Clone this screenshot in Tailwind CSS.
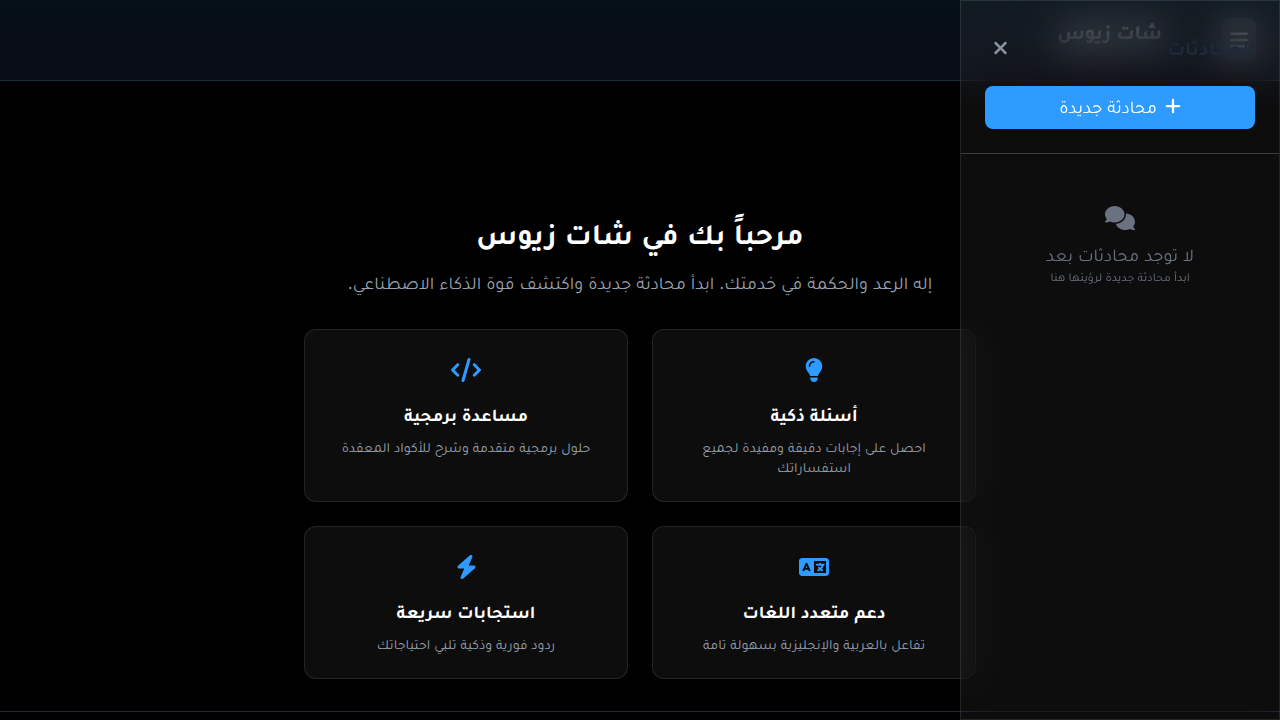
<!DOCTYPE html>
<html lang="ar" dir="rtl">
<head>
<meta charset="utf-8">
<meta name="viewport" content="width=device-width, initial-scale=1">
<title>شات زيوس</title>
<script src="https://cdn.jsdelivr.net/npm/@tailwindcss/browser@4"></script>
</head>
<body class="bg-black text-white font-['Liberation_Sans',Tajawal,sans-serif] h-screen overflow-hidden flex flex-col">
<header class="h-[81px] shrink-0 border-b border-gray-800 bg-linear-to-b from-[#041018] via-[#080d17] via-40% to-[#080d17] px-6 flex items-center">
  <button type="button" aria-label="القائمة" class="w-[34px] h-11 rounded-lg bg-white/10 flex items-center justify-center">
    <svg class="w-[18px] h-5" viewBox="0 0 448 512" fill="currentColor"><path d="M0 96C0 78.300 14.300 64 32 64H416c17.700 0 32 14.300 32 32s-14.300 32-32 32H32C14.300 128 0 113.700 0 96zM0 256c0-17.700 14.300-32 32-32H416c17.700 0 32 14.300 32 32s-14.300 32-32 32H32c-17.700 0-32-14.300-32-32zM448 416c0 17.700-14.300 32-32 32H32c-17.700 0-32-14.300-32-32s14.300-32 32-32H416c17.700 0 32 14.300 32 32z"/></svg>
  </button>
  <div class="ms-[60px] pb-4"><h1 class="text-xl leading-7 font-bold">شات زيوس</h1></div>
</header>

<main class="flex-1 flex flex-col justify-end items-center px-4 pb-8">
  <div class="w-full max-w-2xl text-center">
    <h2 class="text-3xl leading-8 font-bold mb-5">مرحباً بك في شات زيوس</h2>
    <p class="text-lg leading-[27px] text-gray-400 mb-8">إله الرعد والحكمة في خدمتك. ابدأ محادثة جديدة واكتشف قوة الذكاء الاصطناعي.</p>
    <div class="grid grid-cols-2 gap-6">
      <article class="rounded-xl border border-white/10 bg-white/5 p-6">
        <svg class="h-6 mx-auto mt-1 mb-5 text-[#2d9bff]" viewBox="0 0 384 512" fill="currentColor"><path d="M272 384c9.600-31.900 29.500-59.100 49.200-86.200c5.200-7.100 10.400-14.200 15.400-21.400c19.800-28.500 31.400-63 31.400-100.300C368 78.800 289.200 0 192 0S16 78.800 16 176c0 37.300 11.600 71.900 31.400 100.300c5 7.200 10.200 14.300 15.400 21.400c19.800 27.100 39.700 54.400 49.200 86.200H272zM192 512c44.200 0 80-35.800 80-80V416H112v16c0 44.200 35.800 80 80 80zM112 176c0 8.800-7.200 16-16 16s-16-7.200-16-16c0-61.900 50.100-112 112-112c8.800 0 16 7.200 16 16s-7.200 16-16 16c-44.200 0-80 35.800-80 80z"/></svg>
        <h3 class="text-lg leading-[27px] font-bold mb-2">أسئلة ذكية</h3>
        <p class="text-sm leading-5 text-gray-400">احصل على إجابات دقيقة ومفيدة لجميع استفساراتك</p>
      </article>
      <article class="rounded-xl border border-white/10 bg-white/5 p-6">
        <svg class="h-6 mx-auto mt-1 mb-5 text-[#2d9bff]" viewBox="0 0 640 512" fill="currentColor"><path d="M392.800 1.200c-17-4.900-34.700 5-39.600 22l-128 448c-4.900 17 5 34.700 22 39.600s34.700-5 39.600-22l128-448c4.900-17-5-34.700-22-39.600zm80.600 120.100c-12.500 12.500-12.500 32.800 0 45.300L562.700 256l-89.400 89.400c-12.500 12.500-12.500 32.800 0 45.300s32.800 12.500 45.300 0l112-112c12.500-12.500 12.500-32.800 0-45.300l-112-112c-12.500-12.500-32.800-12.500-45.300 0zm-306.700 0c-12.500-12.500-32.800-12.500-45.300 0l-112 112c-12.500 12.500-12.500 32.800 0 45.300l112 112c12.500 12.500 32.800 12.500 45.300 0s12.500-32.800 0-45.300L77.300 256l89.400-89.400c12.500-12.500 12.500-32.800 0-45.300z"/></svg>
        <h3 class="text-lg leading-[27px] font-bold mb-2">مساعدة برمجية</h3>
        <p class="text-sm leading-5 text-gray-400">حلول برمجية متقدمة وشرح للأكواد المعقدة</p>
      </article>
      <article class="rounded-xl border border-white/10 bg-white/5 p-6">
        <svg class="h-6 mx-auto mt-1 mb-5 text-[#2d9bff]" viewBox="0 0 640 512" fill="currentColor"><path d="M0 128C0 92.700 28.700 64 64 64H256h48 16H576c35.300 0 64 28.700 64 64V384c0 35.300-28.700 64-64 64H320 304 256 64c-35.300 0-64-28.700-64-64V128zm320 0V384H576V128H320zM178.300 175.900c-3.200-7.200-10.400-11.900-18.300-11.900s-15.100 4.700-18.300 11.900l-64 144c-4.500 10.100 .1 21.900 10.200 26.400s21.900-.1 26.400-10.200l8.900-20.100h73.600l8.900 20.100c4.500 10.100 16.300 14.600 26.400 10.200s14.600-16.300 10.200-26.400l-64-144zM160 233.200L179 276H141l19-42.800zM448 164c11 0 20 9 20 20v4h44 16c11 0 20 9 20 20s-9 20-20 20h-2l-1.600 4.500c-8.900 24.400-22.400 46.600-39.600 65.400c.9 .6 1.800 1.100 2.700 1.600l18.900 11.300c9.500 5.700 12.500 18 6.900 27.400s-18 12.500-27.400 6.900l-18.900-11.300c-4.500-2.700-8.800-5.500-13.100-8.500c-10.600 7.500-21.900 14-34 19.400l-3.600 1.600c-10.100 4.500-21.900-.1-26.400-10.200s.1-21.900 10.200-26.400l3.600-1.600c6.400-2.900 12.600-6.100 18.500-9.800l-12.200-12.200c-7.800-7.800-7.800-20.500 0-28.300s20.500-7.800 28.300 0l14.600 14.600 .5 .5c12.400-13.100 22.500-28.300 29.800-45H448 376c-11 0-20-9-20-20s9-20 20-20h52v-4c0-11 9-20 20-20z"/></svg>
        <h3 class="text-lg leading-[27px] font-bold mb-2">دعم متعدد اللغات</h3>
        <p class="text-sm leading-5 text-gray-400">تفاعل بالعربية والإنجليزية بسهولة تامة</p>
      </article>
      <article class="rounded-xl border border-white/10 bg-white/5 p-6">
        <svg class="h-6 mx-auto mt-1 mb-5 text-[#2d9bff]" viewBox="0 0 448 512" fill="currentColor"><path d="M349.400 44.600c5.900-13.700 1.500-29.700-10.600-38.500s-28.600-8-39.900 1.800l-256 224c-10 8.800-13.600 22.900-8.900 35.300S50.700 288 64 288H175.500L98.600 467.400c-5.900 13.700-1.500 29.700 10.600 38.500s28.600 8 39.900-1.800l256-224c10-8.800 13.600-22.900 8.900-35.300s-16.600-20.700-30-20.700H272.500L349.400 44.600z"/></svg>
        <h3 class="text-lg leading-[27px] font-bold mb-2">استجابات سريعة</h3>
        <p class="text-sm leading-5 text-gray-400">ردود فورية وذكية تلبي احتياجاتك</p>
      </article>
    </div>
  </div>
</main>
<footer class="h-[9px] shrink-0 border-t border-gray-800"></footer>

<!-- Conversations drawer, over the page -->
<aside class="fixed inset-y-0 right-0 w-80">
  <div class="absolute inset-0 bg-white/6 backdrop-blur-[20px] opacity-93"></div>
  <div class="relative h-full border border-white/10">
    <div class="p-6 border-b border-white/20">
      <div class="flex items-center justify-between h-[45px] mb-4">
        <h2 class="text-xl leading-7 font-bold text-gray-800">المحادثات</h2>
        <button type="button" aria-label="إغلاق" class="p-2 text-[#8b919c]">
          <svg class="w-[15px] h-5" viewBox="0 0 384 512" fill="currentColor"><path d="M342.600 150.600c12.500-12.500 12.500-32.800 0-45.300s-32.800-12.500-45.300 0L192 210.700 86.600 105.400c-12.500-12.500-32.800-12.500-45.300 0s-12.500 32.800 0 45.300L146.700 256 41.400 361.400c-12.500 12.500-12.500 32.800 0 45.300s32.800 12.500 45.300 0L192 301.300 297.400 406.600c12.500 12.500 32.800 12.500 45.300 0s12.500-32.800 0-45.300L237.300 256 342.600 150.600z"/></svg>
        </button>
      </div>
      <button type="button" class="w-full h-[43px] rounded-lg bg-[#2d9bff] flex items-center justify-center gap-2 text-lg leading-[27px]">
        <svg class="w-4 h-[18px] mb-1" viewBox="16 0 416 512" fill="currentColor"><path d="M256 80c0-17.700-14.300-32-32-32s-32 14.300-32 32V224H48c-17.700 0-32 14.300-32 32s14.300 32 32 32H192V432c0 17.700 14.300 32 32 32s32-14.300 32-32V288H400c17.700 0 32-14.300 32-32s-14.300-32-32-32H256V80z"/></svg>
        <span>محادثة جديدة</span>
      </button>
    </div>
    <div class="pt-12 px-6 text-center text-gray-500">
      <svg class="h-6 mx-auto mt-1 mb-3" viewBox="0 0 640 512" fill="currentColor"><path d="M208 352c114.900 0 208-78.800 208-176S322.900 0 208 0S0 78.800 0 176c0 38.600 14.700 74.300 39.600 103.400c-3.500 9.400-8.700 17.700-14.200 24.700c-4.800 6.200-9.700 11-13.300 14.300c-1.800 1.600-3.300 2.900-4.300 3.700c-.5 .4-.9 .7-1.100 .8l-.2 .2C1 327.200-1.400 334.400 .8 340.900S9.100 352 16 352c21.800 0 43.800-5.600 62.100-12.500c9.200-3.500 17.800-7.400 25.300-11.400C134.100 343.300 169.800 352 208 352zM448 176c0 112.300-99.100 196.900-216.500 207C255.800 457.400 336.400 512 432 512c38.200 0 73.900-8.700 104.700-23.900c7.500 4 16 7.900 25.200 11.400c18.300 6.900 40.300 12.500 62.100 12.500c6.900 0 13.100-4.500 15.200-11.100c2.100-6.600-.2-13.800-5.800-17.900l-.2-.2c-.2-.2-.6-.4-1.100-.8c-1-.8-2.500-2-4.300-3.700c-3.600-3.300-8.500-8.100-13.300-14.300c-5.500-7-10.700-15.400-14.200-24.700c24.900-29 39.600-64.700 39.600-103.400c0-92.800-84.900-168.900-192.600-175.500c.4 5.100 .6 10.300 .6 15.500z"/></svg>
      <p class="text-lg leading-[27px]">لا توجد محادثات بعد</p>
      <p class="text-xs leading-4">ابدأ محادثة جديدة لرؤيتها هنا</p>
    </div>
  </div>
</aside>
</body>
</html>
